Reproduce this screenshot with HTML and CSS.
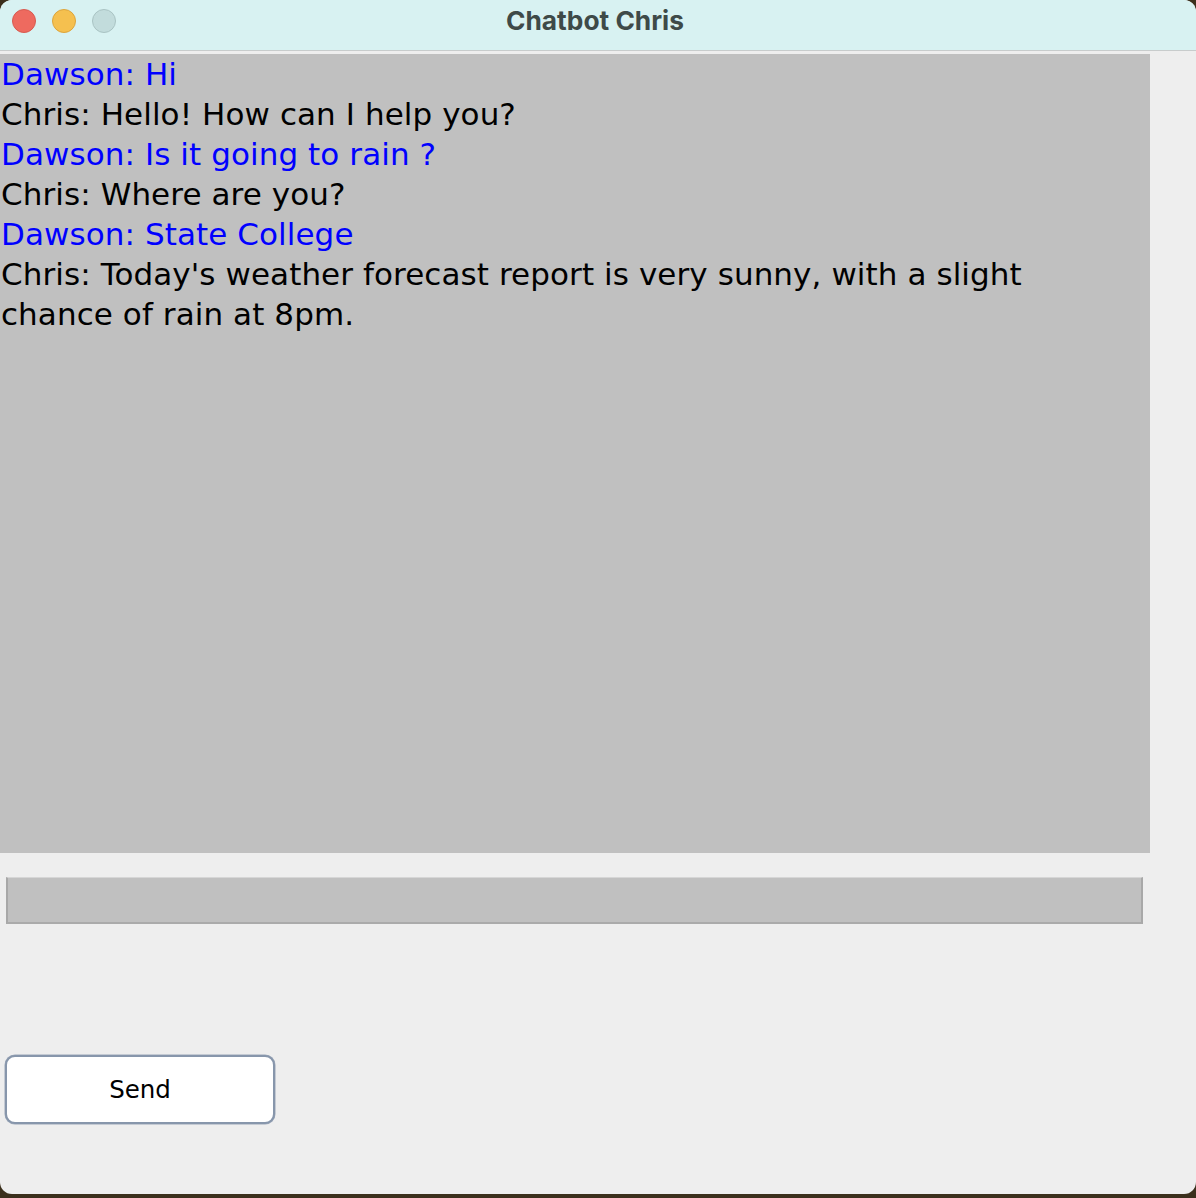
FILE: index.html
```html
<!DOCTYPE html>
<html>
<head>
<meta charset="utf-8">
<link rel="stylesheet" href="styles.css">
</head>
<body>
<div class="window">
  <div class="titlebar">
    <div class="lights">
      <span class="light red"></span>
      <span class="light yellow"></span>
      <span class="light grey"></span>
    </div>
    <div class="title">Chatbot Chris</div>
  </div>
  <div class="content">
    <div class="chat">
      <div class="msg user">Dawson: Hi</div>
      <div class="msg bot">Chris: Hello! How can I help you?</div>
      <div class="msg user">Dawson: Is it going to rain ?</div>
      <div class="msg bot">Chris: Where are you?</div>
      <div class="msg user">Dawson: State College</div>
      <div class="msg bot">Chris: Today's weather forecast report is very sunny, with a slight<br>chance of rain at 8pm.</div>
    </div>
    <div class="input"></div>
    <button class="send">Send</button>
  </div>
</div>
</body>
</html>
```
FILE: styles.css
```css
html, body {
  margin: 0;
  padding: 0;
}
body {
  width: 1196px;
  height: 1198px;
  background: #3b2f1c;
  overflow: hidden;
}
.window {
  width: 1196px;
  height: 1194px;
  background: #eeeeee;
  border-radius: 12px;
  overflow: hidden;
  display: flex;
  flex-direction: column;
}
.titlebar {
  height: 50px;
  background: #d8f2f2;
  border-bottom: 1px solid #c8cccc;
  position: relative;
  display: flex;
  align-items: center;
  justify-content: center;
  flex-shrink: 0;
}
.lights {
  position: absolute;
  left: 12px;
  top: 9px;
  display: flex;
  gap: 16px;
}
.light {
  width: 24px;
  height: 24px;
  border-radius: 50%;
  box-sizing: border-box;
}
.red { background: #ee6a5f; border: 1px solid #d75a50; }
.yellow { background: #f5c04f; border: 1px solid #dca43c; }
.grey { background: #c2dcdc; border: 1px solid #a9c3c3; }
.title {
  font-family: "Inter", "Liberation Sans", sans-serif;
  font-weight: 700;
  font-size: 26.3px;
  color: #3e4a48;
  margin-top: -9px;
  margin-left: -6px;
}
.content {
  flex: 1;
  padding-top: 3px;
  display: flex;
  flex-direction: column;
}
.chat {
  width: 1150px;
  height: 799px;
  background: #c0c0c0;
  font-family: "DejaVu Sans", sans-serif;
  font-size: 31px;
  letter-spacing: 0.08px;
  line-height: 40px;
  box-sizing: border-box;
}
.msg { padding-left: 1px; }
.user { color: #0000ff; }
.bot { color: #000000; }
.input {
  margin: 24px 0 0 6px;
  width: 1137px;
  height: 47px;
  background: #c0c0c0;
  box-sizing: border-box;
  border-top: 1px solid #d6d6d6;
  border-left: 2px solid #a8a8a8;
  border-right: 2px solid #a8a8a8;
  border-bottom: 2px solid #aaaaaa;
}
.send {
  margin: 131px 0 0 5px;
  width: 270px;
  height: 69px;
  background: #ffffff;
  border: 2px solid #8796ab;
  border-radius: 10px;
  box-shadow: 0 0 0 0.5px #9aa6b8;
  font-family: "DejaVu Sans", sans-serif;
  font-size: 24.5px;
  color: #000;
  padding: 0;
}
```
